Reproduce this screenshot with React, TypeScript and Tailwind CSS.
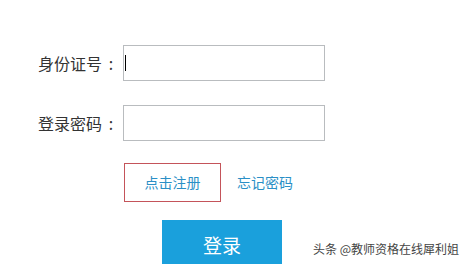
export default function App() {
  const font = { fontFamily: '"Noto Sans CJK SC", "Noto Sans", sans-serif' }
  return (
    <div className="relative h-[264px] w-[466px] overflow-hidden bg-white" style={font}>
      <div className="flex flex-col pt-[45px]">
        <div className="flex items-center pl-[38px]">
          <span className="flex w-[80px] text-[16px] leading-none text-[#333]">
            身份证号<span className="ml-[2px] w-[14px] text-center">:</span>
          </span>
          <div className="ml-[5px] flex h-[36px] w-[202px] items-center border border-[#b9bcbf] pl-[1px]">
            <span className="h-[16px] w-[1px] bg-black" />
          </div>
        </div>
        <div className="mt-[24px] flex items-center pl-[38px]">
          <span className="flex w-[80px] text-[16px] leading-none text-[#333]">
            登录密码<span className="ml-[2px] w-[14px] text-center">:</span>
          </span>
          <div className="ml-[5px] h-[36px] w-[202px] border border-[#b9bcbf]" />
        </div>
        <div className="mt-[22px] flex items-center pl-[124px]">
          <div className="flex h-[39px] w-[97px] items-center justify-center border border-[#c4545a] text-[14px] text-[#2a8fc6]">
            点击注册
          </div>
          <span className="ml-[16px] text-[14px] text-[#2a8fc6]">忘记密码</span>
        </div>
        <div className="mt-[18px] pl-[162px]">
          <div className="flex h-[50px] w-[120px] items-center justify-center bg-[#1aa0dc] text-[19px] text-white">
            登录
          </div>
        </div>
      </div>
      <div className="absolute left-[313px] top-[243px] text-[12px] leading-none text-[#444]">
        头条 @教师资格在线犀利姐
      </div>
    </div>
  )
}
